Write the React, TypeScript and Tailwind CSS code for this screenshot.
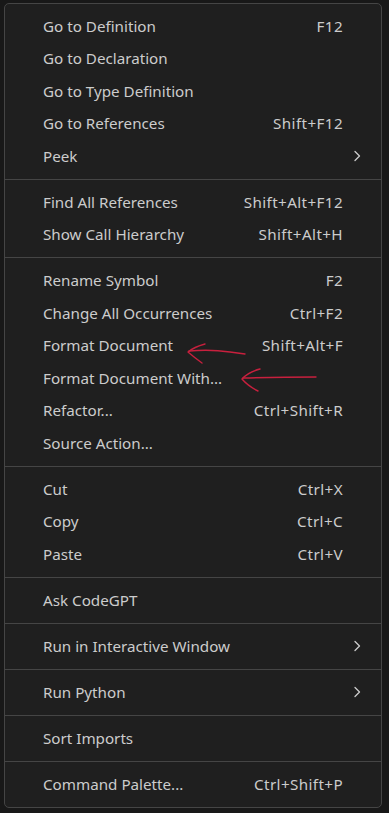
type MenuItem = { label: string; shortcut?: string; submenu?: boolean };

const SECTIONS: MenuItem[][] = [
  [
    { label: 'Go to Definition', shortcut: 'F12' },
    { label: 'Go to Declaration' },
    { label: 'Go to Type Definition' },
    { label: 'Go to References', shortcut: 'Shift+F12' },
    { label: 'Peek', submenu: true },
  ],
  [
    { label: 'Find All References', shortcut: 'Shift+Alt+F12' },
    { label: 'Show Call Hierarchy', shortcut: 'Shift+Alt+H' },
  ],
  [
    { label: 'Rename Symbol', shortcut: 'F2' },
    { label: 'Change All Occurrences', shortcut: 'Ctrl+F2' },
    { label: 'Format Document', shortcut: 'Shift+Alt+F' },
    { label: 'Format Document With...' },
    { label: 'Refactor...', shortcut: 'Ctrl+Shift+R' },
    { label: 'Source Action...' },
  ],
  [
    { label: 'Cut', shortcut: 'Ctrl+X' },
    { label: 'Copy', shortcut: 'Ctrl+C' },
    { label: 'Paste', shortcut: 'Ctrl+V' },
  ],
  [{ label: 'Ask CodeGPT' }],
  [{ label: 'Run in Interactive Window', submenu: true }],
  [{ label: 'Run Python', submenu: true }],
  [{ label: 'Sort Imports' }],
  [{ label: 'Command Palette...', shortcut: 'Ctrl+Shift+P' }],
];

function Chevron() {
  return (
    <svg width="10" height="14" viewBox="0 0 10 14" fill="none">
      <path d="M3 2.5 L7.5 7 L3 11.5" stroke="#cccccc" strokeWidth="1.3" strokeLinecap="round" strokeLinejoin="round" />
    </svg>
  );
}

function Row({ item }: { item: MenuItem }) {
  return (
    <div className="flex h-[32.5px] items-center pl-[38px] pr-[12px]">
      <span className="flex-1 whitespace-nowrap">{item.label}</span>
      {item.shortcut ? <span className="whitespace-nowrap tracking-[0.4px]">{item.shortcut}</span> : null}
      <span className="flex w-[26px] justify-center pl-[2px]">{item.submenu ? <Chevron /> : null}</span>
    </div>
  );
}

export default function App() {
  return (
    <div className="relative min-h-screen bg-[#181818] pl-[4px] pt-[3px]">
      <div
        className="w-[378px] rounded-[5px] border border-[#454545] bg-[#1f1f1f] pb-[6px] pt-[6px] text-[15.2px] text-[#cccccc]"
        style={{ fontFamily: '"Noto Sans", "Open Sans", sans-serif' }}
      >
        {SECTIONS.map((section, i) => (
          <div key={i}>
            {i > 0 ? <div className="my-[6.25px] h-px bg-[#454545]" /> : null}
            {section.map((item) => (
              <Row key={item.label} item={item} />
            ))}
          </div>
        ))}
      </div>

      {/* hand-drawn red arrows */}
      <svg className="pointer-events-none absolute left-0 top-0" width="389" height="813" fill="none">
        <g stroke="#c8203e" strokeWidth="1.4" strokeLinecap="round" strokeLinejoin="round">
          <path d="M205 344 Q194 347 188 352 Q195 358 202 363" />
          <path d="M189 351 Q210 349 230 352 L245 354" />
          <path d="M260 369 Q248 372 242 379 Q248 386 258 391" />
          <path d="M243 378 Q280 377 316 377" />
        </g>
      </svg>
    </div>
  );
}
